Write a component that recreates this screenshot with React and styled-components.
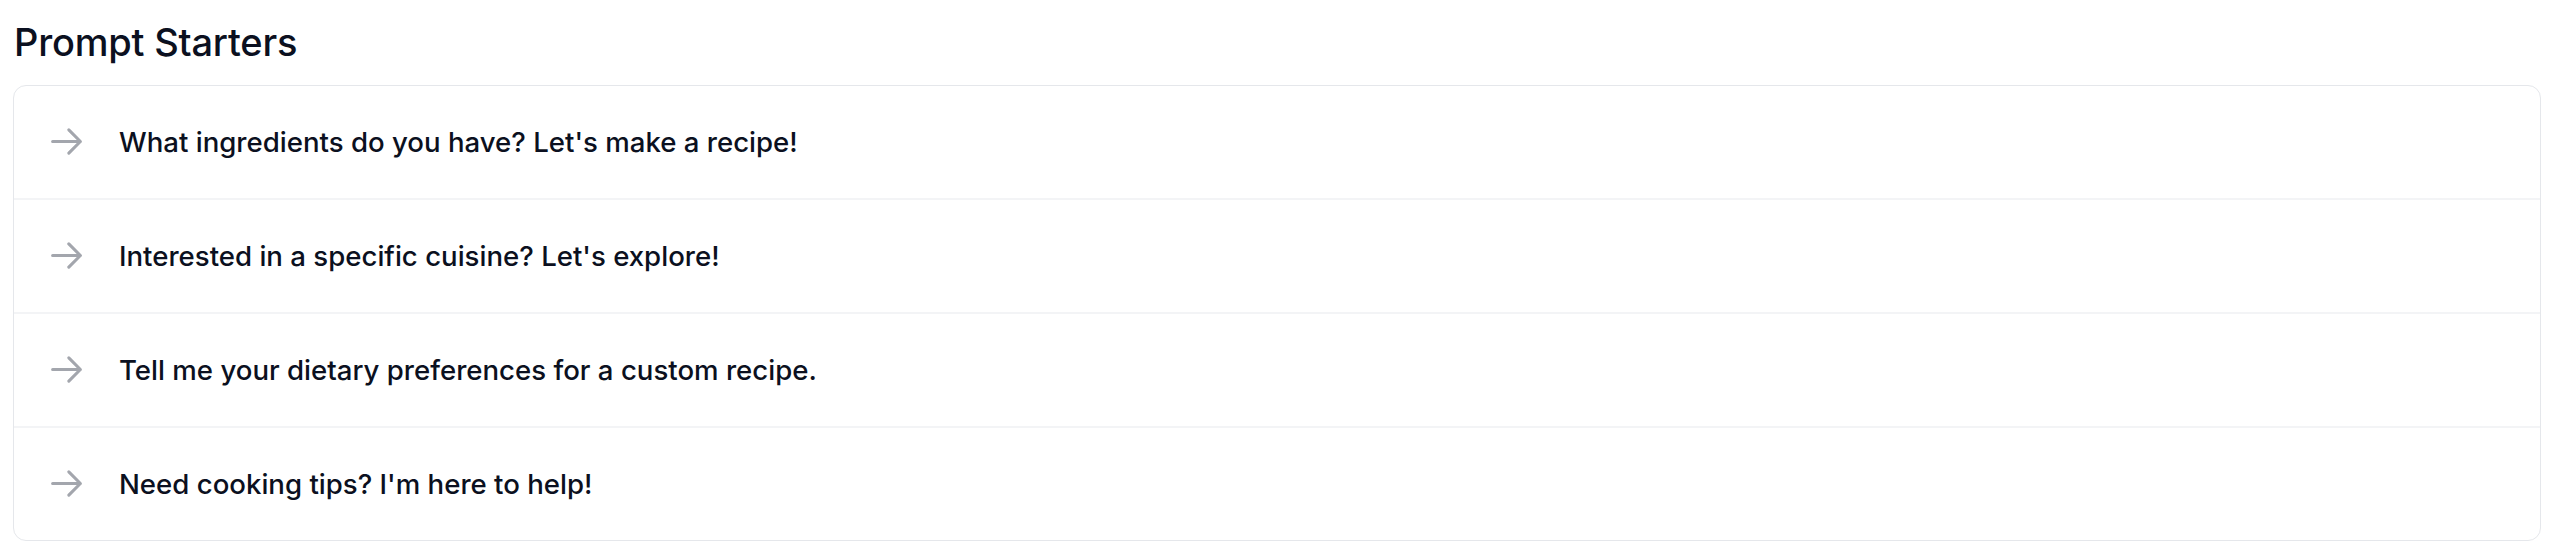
import React from "react";
import styled, { createGlobalStyle } from "styled-components";

const GlobalStyle = createGlobalStyle`
	body {
		margin: 0;
		background: #ffffff;
		font-family: Inter, "Noto Sans", sans-serif;
		color: #0f172a;
		-webkit-font-smoothing: antialiased;
	}
`;

const Page = styled.div`
	padding: 18px 25px 0 13px;
`;

const Title = styled.h2`
	margin: 0 0 19px 1px;
	font-size: 38px;
	font-weight: 500;
	line-height: 48px;
	letter-spacing: -0.2px;
	color: #0b1020;
`;

const Card = styled.div`
	border: 1.5px solid #e5e7eb;
	border-radius: 13px;
	overflow: hidden;
`;

const Row = styled.button`
	box-sizing: content-box;
	display: flex;
	align-items: center;
	gap: 34px;
	width: calc(100% - 34px);
	height: 111px;
	padding: 0 0 1px 34px;
	border: 0;
	border-top: ${({ first }) => (first ? "0" : "2px solid #f3f4f6")};
	background: transparent;
	font-family: inherit;
	font-size: 27.6px;
	font-weight: 500;
	color: #0b1020;
	text-align: left;
	cursor: pointer;
`;

const Icon = styled.svg`
	width: 37px;
	height: 37px;
	flex-shrink: 0;
	color: #a3a6ad;
`;

const ArrowIcon = () => (
	<Icon viewBox="0 0 24 24" fill="none" stroke="currentColor" strokeWidth="2">
		<path
			strokeLinecap="round"
			strokeLinejoin="round"
			d="M13.5 4.5 21 12m0 0-7.5 7.5M21 12H3"
		/>
	</Icon>
);

const starters = [
	"What ingredients do you have? Let's make a recipe!",
	"Interested in a specific cuisine? Let's explore!",
	"Tell me your dietary preferences for a custom recipe.",
	"Need cooking tips? I'm here to help!",
];

const App = () => (
	<>
		<GlobalStyle />
		<Page>
			<Title>Prompt Starters</Title>
			<Card>
				{starters.map((text, i) => (
					<Row key={text} first={i === 0}>
						<ArrowIcon />
						<span>{text}</span>
					</Row>
				))}
			</Card>
		</Page>
	</>
);

export default App;
